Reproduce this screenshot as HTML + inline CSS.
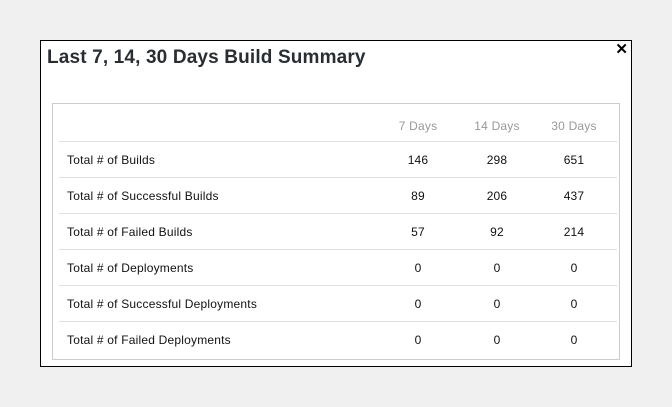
<!DOCTYPE html>
<html><head><style>
body{margin:0;width:672px;height:407px;background:#f0f0f0;font-family:"Liberation Sans",sans-serif;position:relative;overflow:hidden}
.m{position:absolute;left:40px;top:40px;width:590px;height:325px;background:#fff;border:1px solid #000}
h1{position:absolute;left:6px;top:6px;margin:0;font-size:19px;font-weight:bold;color:#292e33;letter-spacing:0.15px}
.x{position:absolute;right:3px;top:-1px;font-size:15px;font-weight:bold;color:#000}
.t{position:absolute;left:11px;top:62px;width:566px;height:255px;border:1px solid #ccc}
.r{position:absolute;left:6px;width:558px;height:36px;border-top:1px solid #e0e0e0;font-size:12px;letter-spacing:0.2px;color:#111}
.r span{position:absolute;top:11px}
.l{left:8px}
.c{width:60px;margin-left:-30px;text-align:center}
</style></head><body>
<div class="m">
<h1>Last 7, 14, 30 Days Build Summary</h1>
<div class="x">✕</div>
<div class="t">
<div class="r" style="top:0;border-top:none;height:37px"><span class="c" style="left:359px;top:15px;color:#999">7 Days</span><span class="c" style="left:438px;top:15px;color:#999">14 Days</span><span class="c" style="left:515px;top:15px;color:#999">30 Days</span></div>
<div class="r" style="top:37px"><span class="l">Total # of Builds</span><span class="c" style="left:359px">146</span><span class="c" style="left:438px">298</span><span class="c" style="left:515px">651</span></div>
<div class="r" style="top:73px"><span class="l">Total # of Successful Builds</span><span class="c" style="left:359px">89</span><span class="c" style="left:438px">206</span><span class="c" style="left:515px">437</span></div>
<div class="r" style="top:109px"><span class="l">Total # of Failed Builds</span><span class="c" style="left:359px">57</span><span class="c" style="left:438px">92</span><span class="c" style="left:515px">214</span></div>
<div class="r" style="top:145px"><span class="l">Total # of Deployments</span><span class="c" style="left:359px">0</span><span class="c" style="left:438px">0</span><span class="c" style="left:515px">0</span></div>
<div class="r" style="top:181px"><span class="l">Total # of Successful Deployments</span><span class="c" style="left:359px">0</span><span class="c" style="left:438px">0</span><span class="c" style="left:515px">0</span></div>
<div class="r" style="top:217px"><span class="l">Total # of Failed Deployments</span><span class="c" style="left:359px">0</span><span class="c" style="left:438px">0</span><span class="c" style="left:515px">0</span></div>
</div>
</div>
</body></html>
